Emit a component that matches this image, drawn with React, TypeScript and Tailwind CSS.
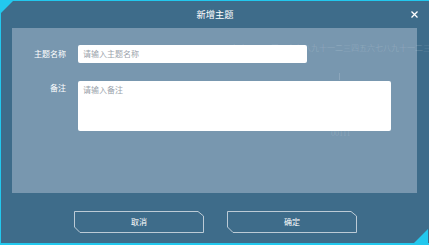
import React from "react";

function ChamferButton({ label }: { label: string }) {
  return (
    <button className="relative w-[130px] h-[22px] flex items-center justify-center text-white text-[8px] leading-none">
      <svg className="absolute inset-0" width="130" height="22" viewBox="0 0 130 22">
        <polygon
          points="0.5,0.5 124,0.5 129.5,5 129.5,21.5 6,21.5 0.5,16"
          fill="none"
          stroke="#bccbd6"
          strokeWidth="1"
        />
      </svg>
      <span className="relative">{label}</span>
    </button>
  );
}

export default function App() {
  return (
    <div
      className="relative w-[429px] h-[245px] overflow-hidden bg-[#3e6c8a] border-t border-l border-b-2 border-[#22c8ee] flex flex-col"
      style={{ fontFamily: '"Noto Sans CJK SC", "Noto Sans", sans-serif' }}
    >
      {/* corner triangles */}
      <svg className="absolute left-0 top-0" width="13" height="13" viewBox="0 0 13 13">
        <polygon points="0,0 12,0 0,12" fill="#22c8ee" />
      </svg>
      <svg className="absolute right-0 bottom-0" width="15" height="15" viewBox="0 0 15 15">
        <polygon points="14,1 14,15 0,15" fill="#22c8ee" />
      </svg>

      {/* title bar */}
      <div className="relative h-[27px] flex items-center justify-center">
        <span className="text-white text-[9.25px] leading-none">新增主题</span>
        <svg className="absolute left-[410px] top-[10px]" width="7" height="7" viewBox="0 0 7 7">
          <path d="M0.5 0.5 L6.5 6.5 M6.5 0.5 L0.5 6.5" stroke="#ffffff" strokeWidth="1.3" />
        </svg>
      </div>

      {/* panel */}
      <div className="relative ml-[11px] w-[405px] h-[165px] bg-[#7897af] pt-[17px] flex flex-col gap-[18px]">
        <div className="flex items-center">
          <div className="w-[54px] text-right text-white text-[8px] leading-none">主题名称</div>
          <div className="relative z-20 ml-[12px] w-[229px] h-[18px] bg-white rounded-[2px] flex items-center pl-[5px] text-[8px] leading-none text-[#9aa3ab]">
            请输入主题名称
          </div>
        </div>
        <div className="flex items-start">
          <div className="w-[54px] text-right text-white text-[8px] leading-none pt-[3px]">备注</div>
          <div className="relative z-20 ml-[12px] w-[313px] h-[50px] bg-white rounded-[2px] pl-[5px] pt-[5px] text-[8px] leading-none text-[#9aa3ab]">
            请输入备注
          </div>
        </div>
      </div>

      {/* faint background text */}
      <div className="absolute z-10 left-[222px] top-[43px] w-[206px] overflow-hidden text-[8px] leading-none whitespace-nowrap text-white/15">
        八九十一二三四五六七八九十一二三四五六七八九十一二三
      </div>
      <div className="absolute z-10 left-[338px] top-[72px] w-px h-[7px] bg-white/15" />
      <div
        className="absolute z-10 left-[330px] top-[129px] text-[8px] leading-none text-white/15"
        style={{ fontFamily: '"Liberation Serif", serif' }}
      >
        00111
      </div>

      {/* buttons */}
      <div className="flex justify-center gap-[23px] mt-[18px] pl-[1px]">
        <ChamferButton label="取消" />
        <ChamferButton label="确定" />
      </div>
    </div>
  );
}
